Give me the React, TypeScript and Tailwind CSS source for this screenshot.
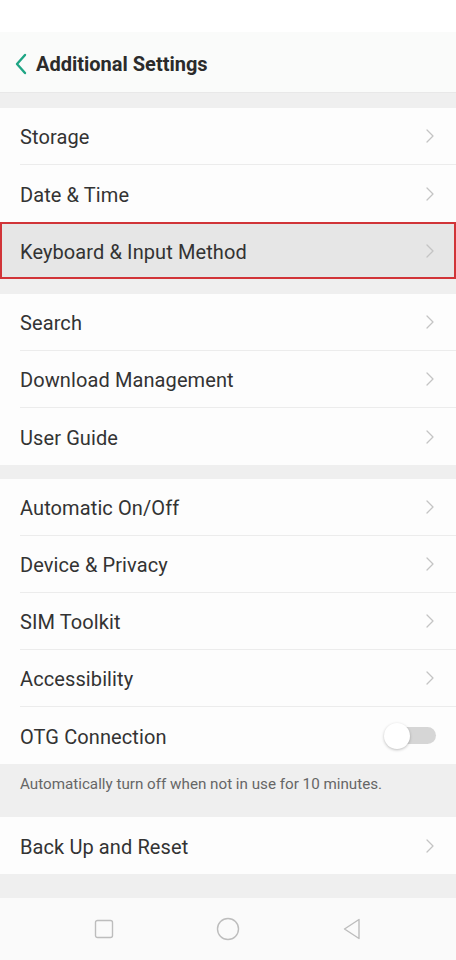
import { ReactNode } from "react";

function Chevron({ className = "" }: { className?: string }) {
  return (
    <svg width="10" height="16" viewBox="0 0 10 16" className={className}>
      <path d="M2 2l6 6-6 6" fill="none" stroke="currentColor" strokeWidth="1.3" strokeLinecap="round" strokeLinejoin="round" />
    </svg>
  );
}

type RowProps = {
  label: string;
  last?: boolean;
  highlight?: boolean;
  right?: ReactNode;
};

function Row({ label, last, highlight, right }: RowProps) {
  return (
    <div
      className={
        highlight
          ? "h-[57px] bg-[#e6e6e6] border-2 border-[#d13438] flex items-stretch pl-[18px] pr-0"
          : "h-[57px] bg-[#fdfdfd] flex items-stretch pl-5"
      }
    >
      <div
        className={
          "flex-1 flex items-center " +
          (highlight ? "pr-[18px] " : "pr-5 ") +
          (last || highlight ? "" : "border-b border-[#ececec]")
        }
      >
        <span className="flex-1 text-[20px] text-[#333] tracking-[0.1px] pt-[2px]">{label}</span>
        {right ?? <Chevron className="text-[#c4c4c4] mr-[1px]" />}
      </div>
    </div>
  );
}

function Toggle() {
  return (
    <div className="relative w-[52px] h-[26px] flex items-center">
      <div className="ml-[6px] h-[17px] w-[46px] rounded-full bg-[#d6d6d6]" />
      <div className="absolute left-0 top-0 h-[26px] w-[26px] rounded-full bg-white shadow-[0_1px_3px_rgba(0,0,0,0.25)]" />
    </div>
  );
}

export default function App() {
  return (
    <div className="w-[456px] h-[960px] bg-[#efefef] flex flex-col font-['Roboto',sans-serif] overflow-hidden">
      <div className="h-[32px] bg-white" />
      <div className="h-[61px] bg-[#fafbfa] flex items-center pl-[14px] pt-[3px] border-b border-[#e8e8e8]">
        <svg width="14" height="22" viewBox="0 0 14 22" className="mr-[8px]">
          <path d="M11 2L3 11l8 9" fill="none" stroke="#1ea584" strokeWidth="2.4" strokeLinecap="round" strokeLinejoin="round" />
        </svg>
        <span className="text-[20px] font-bold text-[#2b2b2b]">Additional Settings</span>
      </div>

      <div className="h-[15px]" />
      <div>
        <Row label="Storage" />
        <Row label="Date & Time" last />
        <Row label="Keyboard & Input Method" highlight />
      </div>

      <div className="h-[15px]" />
      <div>
        <Row label="Search" />
        <Row label="Download Management" />
        <Row label="User Guide" last />
      </div>

      <div className="h-[14px]" />
      <div>
        <Row label="Automatic On/Off" />
        <Row label="Device & Privacy" />
        <Row label="SIM Toolkit" />
        <Row label="Accessibility" />
        <Row label="OTG Connection" last right={<Toggle />} />
      </div>

      <div className="h-[53px] px-5 pt-[9px] text-[15.2px] text-[#666]">
        Automatically turn off when not in use for 10 minutes.
      </div>

      <div>
        <Row label="Back Up and Reset" last />
      </div>

      <div className="flex-1" />
      <div className="h-[62px] bg-[#fafafa] flex items-center justify-between pl-[94px] pr-[94px]">
        <svg width="20" height="20" viewBox="0 0 20 20">
          <rect x="1.5" y="1.5" width="17" height="17" rx="2" fill="none" stroke="#bdbdbd" strokeWidth="1.4" />
        </svg>
        <svg width="24" height="24" viewBox="0 0 24 24">
          <circle cx="12" cy="12" r="10.5" fill="none" stroke="#bdbdbd" strokeWidth="1.4" />
        </svg>
        <svg width="20" height="24" viewBox="0 0 20 24">
          <path d="M17 2.5v19L2.5 12z" fill="none" stroke="#bdbdbd" strokeWidth="1.4" strokeLinejoin="round" />
        </svg>
      </div>
    </div>
  );
}
